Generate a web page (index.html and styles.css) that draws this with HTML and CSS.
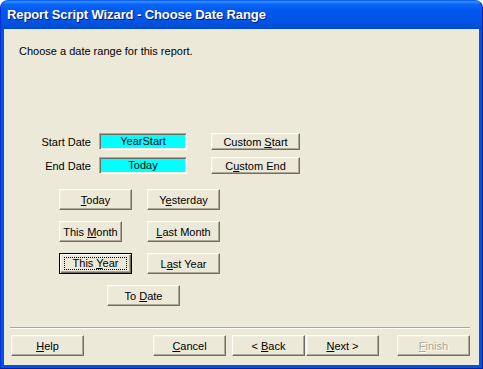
FILE: index.html
```html
<!DOCTYPE html>
<html lang="en">
<head>
  <meta charset="UTF-8">
  <title>Report Script Wizard - Choose Date Range</title>
  <link rel="stylesheet" href="styles.css">
</head>
<body>

  <div class="window">
    <div class="titlebar">Report Script Wizard - Choose Date Range</div>

    <div class="client">
      <p class="intro">Choose a date range for this report.</p>

      <div class="date-row">
        <span class="date-label">Start Date</span>
        <span class="field">YearStart</span>
        <button class="btn btn-custom">Custom <u>S</u>tart</button>
      </div>
      <div class="date-row row-end">
        <span class="date-label">End Date</span>
        <span class="field">Today</span>
        <button class="btn btn-custom">C<u>u</u>stom End</button>
      </div>

      <div class="presets">
        <div class="preset-row">
          <button class="btn btn-preset"><u>T</u>oday</button>
          <button class="btn btn-preset col2">Y<u>e</u>sterday</button>
        </div>
        <div class="preset-row">
          <button class="btn btn-preset narrow">This <u>M</u>onth</button>
          <button class="btn btn-preset col2 after-narrow"><u>L</u>ast Month</button>
        </div>
        <div class="preset-row">
          <button class="btn btn-preset btn-default"><span class="focus">This <u>Y</u>ear</span></button>
          <button class="btn btn-preset col2">L<u>a</u>st Year</button>
        </div>
        <div class="preset-row">
          <button class="btn btn-preset todate">To <u>D</u>ate</button>
        </div>
      </div>

      <div class="separator"></div>

      <div class="footer">
        <button class="btn btn-nav help"><u>H</u>elp</button>
        <button class="btn btn-nav cancel"><u>C</u>ancel</button>
        <button class="btn btn-nav back">&lt; <u>B</u>ack</button>
        <button class="btn btn-nav next"><u>N</u>ext &gt;</button>
        <button class="btn btn-nav finish" disabled><u>F</u>inish</button>
      </div>
    </div>
  </div>

</body>
</html>
```

FILE: styles.css
```css
* {
  box-sizing: border-box;
}

body {
  margin: 0;
  background: #fff;
  font-family: "Liberation Sans", Arial, sans-serif;
  font-size: 11px;
  color: #000;
}

.window {
  width: 483px;
  height: 369px;
  display: flex;
  flex-direction: column;
  background: #0054e3;
  border-radius: 8px 8px 0 0;
  border: 1px solid #0831d9;
  border-top-color: #0a5ff5;
  border-bottom-color: #001ea0;
  border-right-color: #001ea0;
}

.titlebar {
  height: 28px;
  padding: 6px 0 0 6px;
  border-radius: 7px 7px 0 0;
  background: linear-gradient(to bottom, #3d95ff 0%, #0a66f7 12%, #0058ee 35%, #0055e5 70%, #0050d8 90%, #0047c8 100%);
  color: #fff;
  font-weight: bold;
  font-size: 13px;
  letter-spacing: -0.1px;
  text-shadow: 1px 1px #0a1a7a;
}

.client {
  flex: 1;
  margin: 0 3px 3px 3px;
  background: #ece9d8;
  display: flex;
  flex-direction: column;
}

.intro {
  margin: 16px 0 0 15px;
  line-height: 13px;
  height: 13px;
}

.date-row {
  display: flex;
  align-items: center;
  margin-top: 75px;
  height: 17px;
}

.row-end {
  margin-top: 7px;
}

.date-label {
  width: 87px;
  text-align: right;
}

.field {
  width: 88px;
  height: 17px;
  margin-left: 8px;
  background: #00ffff;
  text-align: center;
  line-height: 15px;
  border: 1px solid;
  border-color: #aca899 #fff #fff #aca899;
  box-shadow: inset 1px 1px #716f64, inset -1px -1px #f1efe2;
}

.btn {
  font-family: "Liberation Sans", Arial, sans-serif;
  font-size: 11px;
  color: #000;
  background: #ece9d8;
  padding: 0;
  text-align: center;
  white-space: nowrap;
  border: 1px solid;
  border-color: #fff #716f64 #716f64 #fff;
  box-shadow: inset -1px -1px #aca899, inset 1px 1px #f1efe2;
}

.btn u {
  text-underline-offset: 1px;
}

.btn-custom {
  width: 89px;
  height: 17px;
  margin-left: 24px;
}

.presets {
  display: flex;
  flex-direction: column;
  gap: 11px;
  margin-top: 15px;
  padding-left: 55px;
}

.preset-row {
  display: flex;
}

.btn-preset {
  width: 73px;
  height: 21px;
}

.col2 {
  margin-left: 15px;
}

.narrow {
  width: 63px;
}

.after-narrow {
  margin-left: 25px;
}

.todate {
  margin-left: 48px;
}

.btn-default {
  border: 1px solid #000;
  box-shadow: inset 1px 1px #fff, inset -1px -1px #716f64, inset -2px -2px #aca899;
}

.focus {
  display: inline-block;
  width: 63px;
  height: 13px;
  line-height: 11px;
  border: 1px dotted #000;
  vertical-align: middle;
}

.separator {
  margin: 21px 9px 0 6px;
  height: 2px;
  border-top: 1px solid #aca899;
  border-bottom: 1px solid #fff;
}

.footer {
  display: flex;
  margin-top: 6px;
  padding-left: 7px;
}

.btn-nav {
  width: 73px;
  height: 21px;
}

.cancel {
  margin-left: 69px;
}

.back {
  margin-left: 6px;
}

.next {
  margin-left: 1px;
}

.finish {
  margin-left: 18px;
  color: #aca899;
  text-shadow: 1px 1px #fff;
}
```
